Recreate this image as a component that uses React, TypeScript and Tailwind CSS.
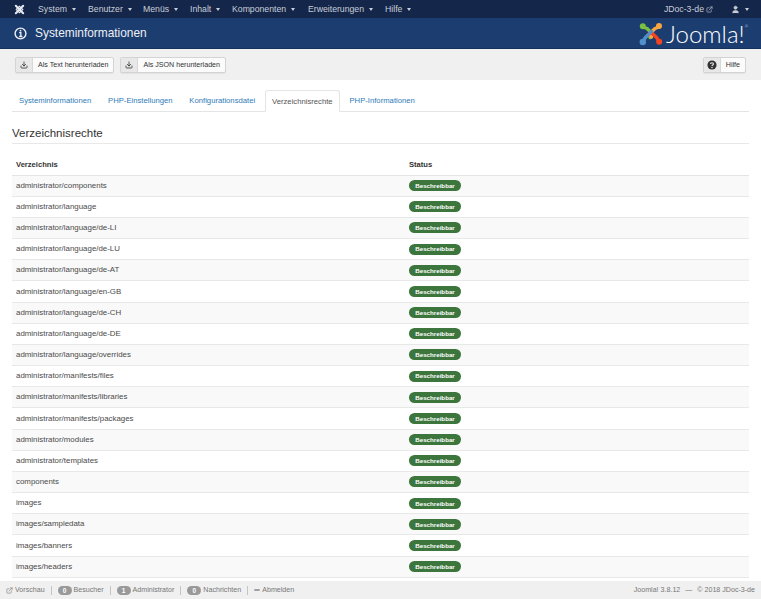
import { Download, ExternalLink, Minus, User } from 'lucide-react';

const menus = [
  { label: 'System', w: 'w-[50px]' },
  { label: 'Benutzer', w: 'w-[55px]' },
  { label: 'Menüs', w: 'w-[47px]' },
  { label: 'Inhalt', w: 'w-[42px]' },
  { label: 'Komponenten', w: 'w-[76px]' },
  { label: 'Erweiterungen', w: 'w-[77px]' },
  { label: 'Hilfe', w: 'w-[30px]' },
];

const tabs = ['Systeminformationen', 'PHP-Einstellungen', 'Konfigurationsdatei', 'Verzeichnisrechte', 'PHP-Informationen'];

const folders = [
  'administrator/components',
  'administrator/language',
  'administrator/language/de-LI',
  'administrator/language/de-LU',
  'administrator/language/de-AT',
  'administrator/language/en-GB',
  'administrator/language/de-CH',
  'administrator/language/de-DE',
  'administrator/language/overrides',
  'administrator/manifests/files',
  'administrator/manifests/libraries',
  'administrator/manifests/packages',
  'administrator/modules',
  'administrator/templates',
  'components',
  'images',
  'images/sampledata',
  'images/banners',
  'images/headers',
];

function Caret() {
  return <span className="ml-[5px] inline-block h-0 w-0 border-x-[2.5px] border-t-[3px] border-x-transparent border-t-current" />;
}

function JoomlaMark({ className }: { className?: string }) {
  return (
    <svg viewBox="0 0 24 24" className={className} fill="none" strokeLinecap="round" strokeLinejoin="round">
      <path d="M4 5 L8 6.5 L14 12.5 L11 15.5" stroke="#7ac143" strokeWidth="3.4" />
      <circle cx="3.8" cy="4.2" r="3" fill="#7ac143" />
      <path d="M20 5 L16 6.5 L10 12.5 L12.5 15" stroke="#f9a541" strokeWidth="3.4" />
      <circle cx="20" cy="4" r="3" fill="#f9a541" />
      <path d="M20 20 L18 16 L12 10 L9.5 12.5" stroke="#f44321" strokeWidth="3.4" />
      <circle cx="20.2" cy="19.8" r="3" fill="#f44321" />
      <path d="M4 20 L6 16 L9 13 M11 11 L12.5 9.5" stroke="#5091cd" strokeWidth="3.4" />
      <circle cx="3.8" cy="20" r="3.2" fill="#5091cd" />
    </svg>
  );
}

function SmallMark() {
  return (
    <svg viewBox="0 0 24 24" className="h-[11px] w-[11px]" fill="none" stroke="#e6e9ef" strokeWidth="4.5" strokeLinecap="round">
      <path d="M4 4 L20 20 M20 4 L4 20" />
      <path d="M5 12 L12 5 L19 12 L12 19 Z" strokeWidth="2.6" />
    </svg>
  );
}

function InfoMark() {
  return (
    <svg viewBox="0 0 24 24" className="h-[13px] w-[13px]" fill="none" stroke="#eef0f4">
      <circle cx="12" cy="12" r="10" strokeWidth="2.6" />
      <path d="M9.5 10.5 H12.6 V17 M9.5 17.5 H15.5" strokeWidth="2.4" />
      <circle cx="12" cy="6.8" r="1.7" fill="#eef0f4" stroke="none" />
    </svg>
  );
}

function HelpMark() {
  return (
    <svg viewBox="0 0 24 24" className="h-[10px] w-[10px]">
      <circle cx="12" cy="12" r="11" fill="#333" />
      <path d="M8.5 9.5 C8.5 5.5 15.5 5.5 15.5 9.5 C15.5 12 12 12 12 14.5" fill="none" stroke="#e8e8e8" strokeWidth="2.8" />
      <circle cx="12" cy="18" r="1.8" fill="#e8e8e8" />
    </svg>
  );
}

function ToolButton({ label, icon, className }: { label: string; icon: React.ReactNode; className?: string }) {
  return (
    <div className={`flex h-[16px] items-stretch rounded-[2px] border border-[#d4d4d4] bg-[#fbfbfb] text-[7.1px] text-[#333] shadow-[0_1px_1px_rgba(0,0,0,0.06)] ${className ?? ''}`}>
      <span className="flex w-[17px] items-center justify-center border-r border-[#d8d8d8] bg-[#e8e8e8]">{icon}</span>
      <span className="flex items-center px-[5px] pt-px">{label}</span>
    </div>
  );
}

function Badge({ count, label }: { count: number; label: string }) {
  return (
    <span className="flex items-center gap-[2px]">
      <span className="flex h-[9px] w-[14px] items-center justify-center rounded-full bg-[#999] text-[6.5px] font-bold text-white">{count}</span>
      {label}
    </span>
  );
}

function Sep() {
  return <span className="mx-[6px] h-[9px] w-px bg-[#c4c4c4]" />;
}

export default function App() {
  return (
    <div className="flex h-[599px] w-[761px] flex-col overflow-hidden bg-white font-['Liberation_Sans',Arial,sans-serif] text-[#333]">
      <nav className="flex h-[18px] shrink-0 items-center bg-[#14264a] pt-px text-[8.7px] text-[#c9ced8]">
        <span className="ml-[14px] flex w-[24px] justify-start">
          <SmallMark />
        </span>
        <div className="flex">
          {menus.map((m) => (
            <span key={m.label} className={`flex items-center ${m.w}`}>
              {m.label}
              <Caret />
            </span>
          ))}
        </div>
        <span className="ml-auto flex items-center gap-[2px]">
          JDoc-3-de
          <ExternalLink size={7} strokeWidth={2} />
        </span>
        <span className="ml-[18px] mr-[12px] flex items-center">
          <User size={9} fill="currentColor" />
          <Caret />
        </span>
      </nav>

      <header className="flex h-[31px] shrink-0 items-center justify-between border-b border-[#14305c] bg-[#1c3d70] pl-[14px] pr-[13px] pt-[2px] text-white">
        <div className="flex items-center gap-[8px]">
          <InfoMark />
          <h1 className="text-[11.9px] text-[#eef0f4]">Systeminformationen</h1>
        </div>
        <div className="flex items-center gap-[3px]">
          <JoomlaMark className="h-[24px] w-[24px]" />
          <span className="flex items-start font-['Lato',sans-serif] text-[24px] leading-none font-light text-white">
            Joomla!
            <span className="mt-[3px] text-[4px]">®</span>
          </span>
        </div>
      </header>

      <div className="flex h-[31px] shrink-0 items-center gap-[6px] bg-[#f0f0f0] pl-[15px] pr-[15px]">
        <ToolButton label="Als Text herunterladen" icon={<Download size={8} strokeWidth={2.4} />} />
        <ToolButton label="Als JSON herunterladen" icon={<Download size={8} strokeWidth={2.4} />} />
        <ToolButton label="Hilfe" className="ml-auto" icon={<HelpMark />} />
      </div>

      <main className="flex min-h-0 flex-1 flex-col overflow-hidden px-[12px] pt-[10px]">
        <div className="flex h-[22px] shrink-0 items-stretch gap-[2.8px] border-b border-[#e4e4e4] text-[7.7px]">
          {tabs.map((t) => {
            const active = t === 'Verzeichnisrechte';
            return (
              <span
                key={t}
                className={
                  active
                    ? 'mb-[-1px] flex items-center rounded-t-[3px] border border-[#e4e4e4] border-b-white bg-white px-[6px] pt-px text-[#555]'
                    : 'flex items-center px-[7px] pt-px text-[#2f7bb8]'
                }
              >
                {t}
              </span>
            );
          })}
        </div>

        <h2 className="mt-[14px] h-[18px] shrink-0 border-b border-[#e8e8e8] text-[11.5px] leading-[14px] text-[#333]">Verzeichnisrechte</h2>

        <div className="mt-[13.5px] flex h-[18px] shrink-0 border-b border-[#e4e4e4] pt-[1.5px] text-[7.6px] font-bold">
          <span className="w-[397px] pl-[4px]">Verzeichnis</span>
          <span>Status</span>
        </div>
        {folders.map((f, i) => (
          <div
            key={f}
            className={`flex h-[21.18px] shrink-0 items-center border-b border-[#e8e8e8] text-[7.9px] text-[#4a4a4a] ${i % 2 === 0 ? 'bg-[#f9f9f9]' : 'bg-white'}`}
          >
            <span className="w-[397px] pl-[4px]">{f}</span>
            <span className="flex h-[11px] w-[52px] items-center justify-center rounded-full bg-[#3c763d] text-[6.2px] font-bold text-white">Beschreibbar</span>
          </div>
        ))}
      </main>

      <footer className="flex h-[18px] shrink-0 items-center bg-[#f0f0f0] pl-[6px] pr-[6px] pt-px text-[7.1px] text-[#777]">
        <span className="flex items-center gap-[2px]">
          <ExternalLink size={7} strokeWidth={2} />
          Vorschau
        </span>
        <Sep />
        <Badge count={0} label="Besucher" />
        <Sep />
        <Badge count={1} label="Administrator" />
        <Sep />
        <Badge count={0} label="Nachrichten" />
        <Sep />
        <span className="-ml-px flex items-center gap-[1px]">
          <Minus size={8} strokeWidth={3} className="text-[#555]" />
          Abmelden
        </span>
        <span className="ml-auto">
          Joomla! 3.8.12<span className="mx-[3px]"> — </span>© 2018 JDoc-3-de
        </span>
      </footer>
    </div>
  );
}
